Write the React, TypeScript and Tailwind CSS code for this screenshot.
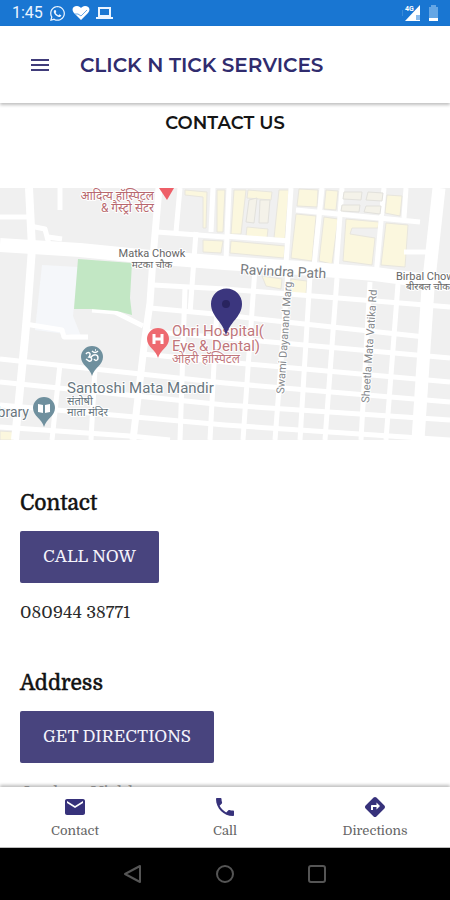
import React from "react";
import { MdEmail, MdPhone, MdDirections, MdMenu } from "react-icons/md";
import { FaWhatsapp } from "react-icons/fa";

const serif = "font-['Domine','Source_Serif_4','Source_Serif_Pro','Noto_Serif','Liberation_Serif',serif]";
const display = "font-['Montserrat','Inter',sans-serif]";

const minorRoads = [
  "M0 29L28 29", "M30 38L45 41L51 64", "M48 49L62 51", "M60 0L60 22",
  "M180 0L176 44", "M157 44L225 49", "M196 44L190 125", "M153 97L225 101L450 119", "M150 120L225 127L258 131L425 149",
  "M213 0L211 44", "M145 143L225 150L450 170", "M142 166L225 174L450 194",
  "M0 171L225 195L450 214", "M0 194L225 217L450 232", "M0 217L225 237L450 252", "M0 239L130 248L170 252",
  "M255 80L243 252", "M288 84L275 252", "M310 88L300 252", "M337 90L325 252", "M370 94L361 252", "M398 96L386 252",
  "M60 176L52 252", "M95 180L91 252", "M185 100L180 252", "M217 120L210 252",
  "M291 0L286 76", "M296 22L420 34", "M322 0L314 78", "M342 0L336 82", "M384 0L376 88", "M406 0L404 30", "M404 64L428 64",
  "M225 48L290 53", "M229 0L226 72",
];

const yellowBlocks = [
  "M234 2L246 2L241 46L231 46Z", "M279 2L289 2L285 51L274 50Z", "M299 1L318 2L317 19L297 18Z", "M326 2L338 3L336 22L324 21Z",
  "M296 26L316 28L312 73L291 70Z", "M324 29L338 31L332 76L319 73Z", "M346 31L379 34L378 40L352 40L350 46L375 50L372 77L343 73Z",
  "M386 35L408 37L405 79L381 77Z", "M387 7L402 8L400 28L385 25Z", "M231 53L285 58L284 70L230 65Z",
  "M248 2L272 4L271 12L247 10Z", "M247 39L268 41L267 50L246 48Z",
  "M185 2L207 4L206 40L203 40L203 9L185 7Z", "M217 2L225 2L223 44L217 44Z", "M203 52L223 53L221 65L203 64Z",
  "M262 88L282 91L281 101L266 98Z", "M291 91L307 93L306 107L290 104Z", "M0 243L15 244L13 252L0 252Z",
];

const greyBlocks = [
  "M249 12L257 10L254 35L246 34Z", "M260 12L270 12L268 35L259 35Z",
  "M344 4L362 4L361 12L343 11Z", "M368 4L383 5L382 13L366 12Z", "M342 17L360 17L359 24L341 23Z", "M366 18L381 18L380 26L364 24Z",
];

function Pin({ x, y, color, children }: { x: number; y: number; color: string; children: React.ReactNode }) {
  return (
    <g transform={`translate(${x} ${y})`}>
      <path d="M0 19C-2 11-11 8-11 0A11 11 0 0 1 11 0C11 8 2 11 0 19Z" fill={color} />
      {children}
    </g>
  );
}

function LocationMap() {
  return (
    <svg viewBox="0 0 450 252" preserveAspectRatio="xMidYMid slice" className="block w-full shrink-0 font-[Roboto,'Noto_Sans',sans-serif]" role="img" aria-label="Map">
      <rect width="450" height="252" fill="#f0f0f0" />
      <path d="M42 77L78 79L73 128L81 148L35 142Z" fill="#f5f7fa" />
      {yellowBlocks.map((d) => <path key={d} d={d} fill="#fbf7de" stroke="#e8e6de" strokeWidth="1" />)}
      <g fill="none" stroke="#fff" strokeLinejoin="round">
        {minorRoads.map((d) => <path key={d} d={d} strokeWidth="5" />)}
        <path d="M29 0L32 60L28 115L25 150L15 252" strokeWidth="8" />
        <path d="M159 0L153 70L150 115L145 150L133 252" strokeWidth="7" />
        <path d="M25 136L62 142L64 149L88 149" strokeWidth="5" />
        <path d="M92 122L115 124L143 138" strokeWidth="5" />
        <path d="M0 57L80 62L150 69L225 75L300 80L375 86L450 96" strokeWidth="14" />
        <path d="M439 0L428 100L418 252" strokeWidth="13" />
      </g>
      {greyBlocks.map((d) => <path key={d} d={d} fill="#f4f2e9" stroke="#e2e1dc" strokeWidth="1" />)}
      <path d="M78 71L132 75L130 110L132 127L117 123L91 121L74 121Z" fill="#c2e7c4" />

      <path d="M159 0L174 0L167 12Z" fill="#ee5f68" />
      <g stroke="#fff" strokeWidth="2" strokeLinejoin="round" style={{ paintOrder: "stroke" }}>
        <g fill="#b8686e" fontSize="12" textAnchor="end">
          <text x="154" y="12">आदित्य हॉस्पिटल</text>
          <text x="154" y="24">&amp; गैस्ट्रो सेंटर</text>
        </g>
        <g fill="#666" fontSize="11" textAnchor="middle">
          <text x="152" y="69">Matka Chowk</text>
          <text x="152" y="80" fontSize="10">मटका चौक</text>
        </g>
        <g fill="#666" fontSize="11">
          <text x="396" y="92">Birbal Chowk</text>
          <text x="406" y="102" fontSize="10">बीरबल चौक</text>
        </g>
        <text x="240" y="86" fontSize="14" fill="#777b80" transform="rotate(3 240 86)">Ravindra Path</text>
        <g fill="#85888c" fontSize="11">
          <text transform="translate(284 206) rotate(-86)">Swami Dayanand Marg</text>
          <text transform="translate(369 215) rotate(-86)">Sheetla Mata Vatika Rd</text>
        </g>
        <g fill="#68767e" fontSize="15">
          <text x="67" y="205">Santoshi Mata Mandir</text>
          <text x="67" y="217" fontSize="11">संतोषी</text>
          <text x="67" y="228" fontSize="11">माता मंदिर</text>
          <text x="29" y="229" fontSize="14" textAnchor="end">Library</text>
        </g>
        <g fill="#bf767b" fontSize="15">
          <text x="172" y="148">Ohri Hospital(</text>
          <text x="172" y="163">Eye &amp; Dental)</text>
          <text x="172" y="175" fontSize="12">ओहरी हॉस्पिटल</text>
        </g>
      </g>

      <Pin x={92} y={169} color="#6f909e">
        <path d="M-6-3C-4-6 0-4-3 0C1 0 0 5-3 4L-6 2M-1 0C2-3 6-3 6 1C6 4 3 4 2 2M0-6C2-4 4-4 6-6M3-7h1" fill="none" stroke="#fff" strokeWidth="1.5" />
      </Pin>
      <Pin x={44} y={220} color="#6f909e">
        <path d="M-6-4L-1-3V5L-6 4ZM6-4L1-3V5L6 4Z" fill="#fff" />
      </Pin>
      <Pin x={158} y={151} color="#ee6a70">
        <path d="M-4-5V5M4-5V5M-4 0H4" fill="none" stroke="#fff" strokeWidth="3" />
      </Pin>
      <path d="M226 148C224 134 211 129 211 116A15 15 0 0 1 242 116C242 129 229 134 226 148Z" fill="#3b367e" />
      <circle cx="226" cy="116" r="4" fill="#29245f" />
    </svg>
  );
}

function StatusBar() {
  return (
    <div className="flex h-[26px] shrink-0 items-center bg-[#1976d2] px-3 text-[#eaf4ff]">
      <span className="w-[37px] font-[Roboto,sans-serif] text-base">1:45</span>
      <FaWhatsapp size={17} />
      <svg className="ml-1.5" width="18" height="16" viewBox="0 0 18 16" aria-hidden="true">
        <path d="M9 15L2 8C-1 4 1 1 5 1C7 1 8 2 9 3C10 2 11 1 13 1C17 1 19 4 16 8Z" fill="#fff" />
        <path d="M3 9L6 9L9 11L15 5" fill="none" stroke="#6aa9e6" strokeWidth="1" />
      </svg>
      <svg className="ml-1.5" width="17" height="14" viewBox="0 0 17 14" fill="none" stroke="currentColor" aria-hidden="true">
        <rect x="3" y="2" width="11" height="8" strokeWidth="2" />
        <path d="M0 12H17" strokeWidth="2" />
      </svg>
      <svg className="ml-auto" width="19" height="18" viewBox="0 0 19 18" aria-hidden="true">
        <path d="M0 6V12" stroke="#5b9fe0" />
        <path d="M18 1V17H3Z" fill="#fff" />
        <path d="M14 11H18V16H14Z" fill="#8cbcec" />
        <text x="3" y="7" fontSize="7" fontWeight="700" fill="#fff" fontFamily="Roboto">4G</text>
      </svg>
      <svg className="ml-2" width="9" height="16" viewBox="0 0 9 16" aria-hidden="true">
        <path d="M0 2H2V0H7V2H9V16H0Z" fill="#64a6e5" />
        <path d="M0 13H9V16H0Z" fill="#fff" />
      </svg>
    </div>
  );
}

const buttonStyle = "flex h-[52px] items-center rounded-xs bg-[#48447e] px-[23px] text-[17px] text-[#f4f3fb]";
const headingStyle = "mb-3 pt-px text-[21px] leading-8 font-normal text-[#111] [-webkit-text-stroke:0.5px]";

const tabs = [
  { label: "Contact", Icon: MdEmail },
  { label: "Call", Icon: MdPhone },
  { label: "Directions", Icon: MdDirections },
];

export default function App() {
  return (
    <div className={`flex h-screen flex-col overflow-hidden bg-white text-[#2a2a2a] ${serif}`}>
      <StatusBar />
      <header className="z-10 flex h-[77px] shrink-0 items-center bg-white px-7 shadow-[0_2px_3px_rgba(0,0,0,0.25)]">
        <button aria-label="Menu" className="mr-7 text-[#413c7a]">
          <MdMenu size={24} className="block" />
        </button>
        <h1 className={`text-xl font-semibold text-[#302c6e] ${display}`}>CLICK N TICK SERVICES</h1>
      </header>

      <main className="min-h-0 flex-1 overflow-hidden">
        <h2 className={`mb-[50px] pt-[5px] text-center text-lg leading-[30px] font-semibold text-[#151515] ${display}`}>CONTACT US</h2>
        <LocationMap />
        <section className="px-5 pt-[46px]">
          <h3 className={headingStyle}>Contact</h3>
          <button className={buttonStyle}>CALL NOW</button>
          <p className="mt-4 text-[17px] leading-7">080944 38771</p>
        </section>
        <section className="px-5 pt-[39px]">
          <h3 className={headingStyle}>Address</h3>
          <button className={buttonStyle}>GET DIRECTIONS</button>
          <p className="mt-4 text-[17px] leading-7 text-[#aaa]">Jaydeep Vishkarma</p>
        </section>
      </main>

      <nav className="z-10 grid h-[61px] shrink-0 grid-cols-3 border-b border-[#bbb] bg-white shadow-[0_-2px_3px_rgba(0,0,0,0.25)]">
        {tabs.map(({ label, Icon }) => (
          <a key={label} href="#" className="flex flex-col items-center pt-2 text-[#37327b]">
            <Icon size={24} />
            <span className="text-[13px] leading-6 text-[#666]">{label}</span>
          </a>
        ))}
      </nav>
      <div className="flex h-[52px] shrink-0 items-center justify-center gap-[72px] bg-black text-[#555]">
        <button aria-label="Back">
          <svg width="20" height="20" viewBox="0 0 20 20" fill="none" stroke="currentColor" strokeWidth="2" strokeLinejoin="round"><path d="M17 2V18L2 10Z" /></svg>
        </button>
        <button aria-label="Home">
          <svg width="20" height="20" viewBox="0 0 20 20" fill="none" stroke="currentColor" strokeWidth="2"><circle cx="10" cy="10" r="8" /></svg>
        </button>
        <button aria-label="Recent apps">
          <svg width="20" height="20" viewBox="0 0 20 20" fill="none" stroke="currentColor" strokeWidth="2"><rect x="2" y="2" width="16" height="16" rx="2" /></svg>
        </button>
      </div>
    </div>
  );
}
